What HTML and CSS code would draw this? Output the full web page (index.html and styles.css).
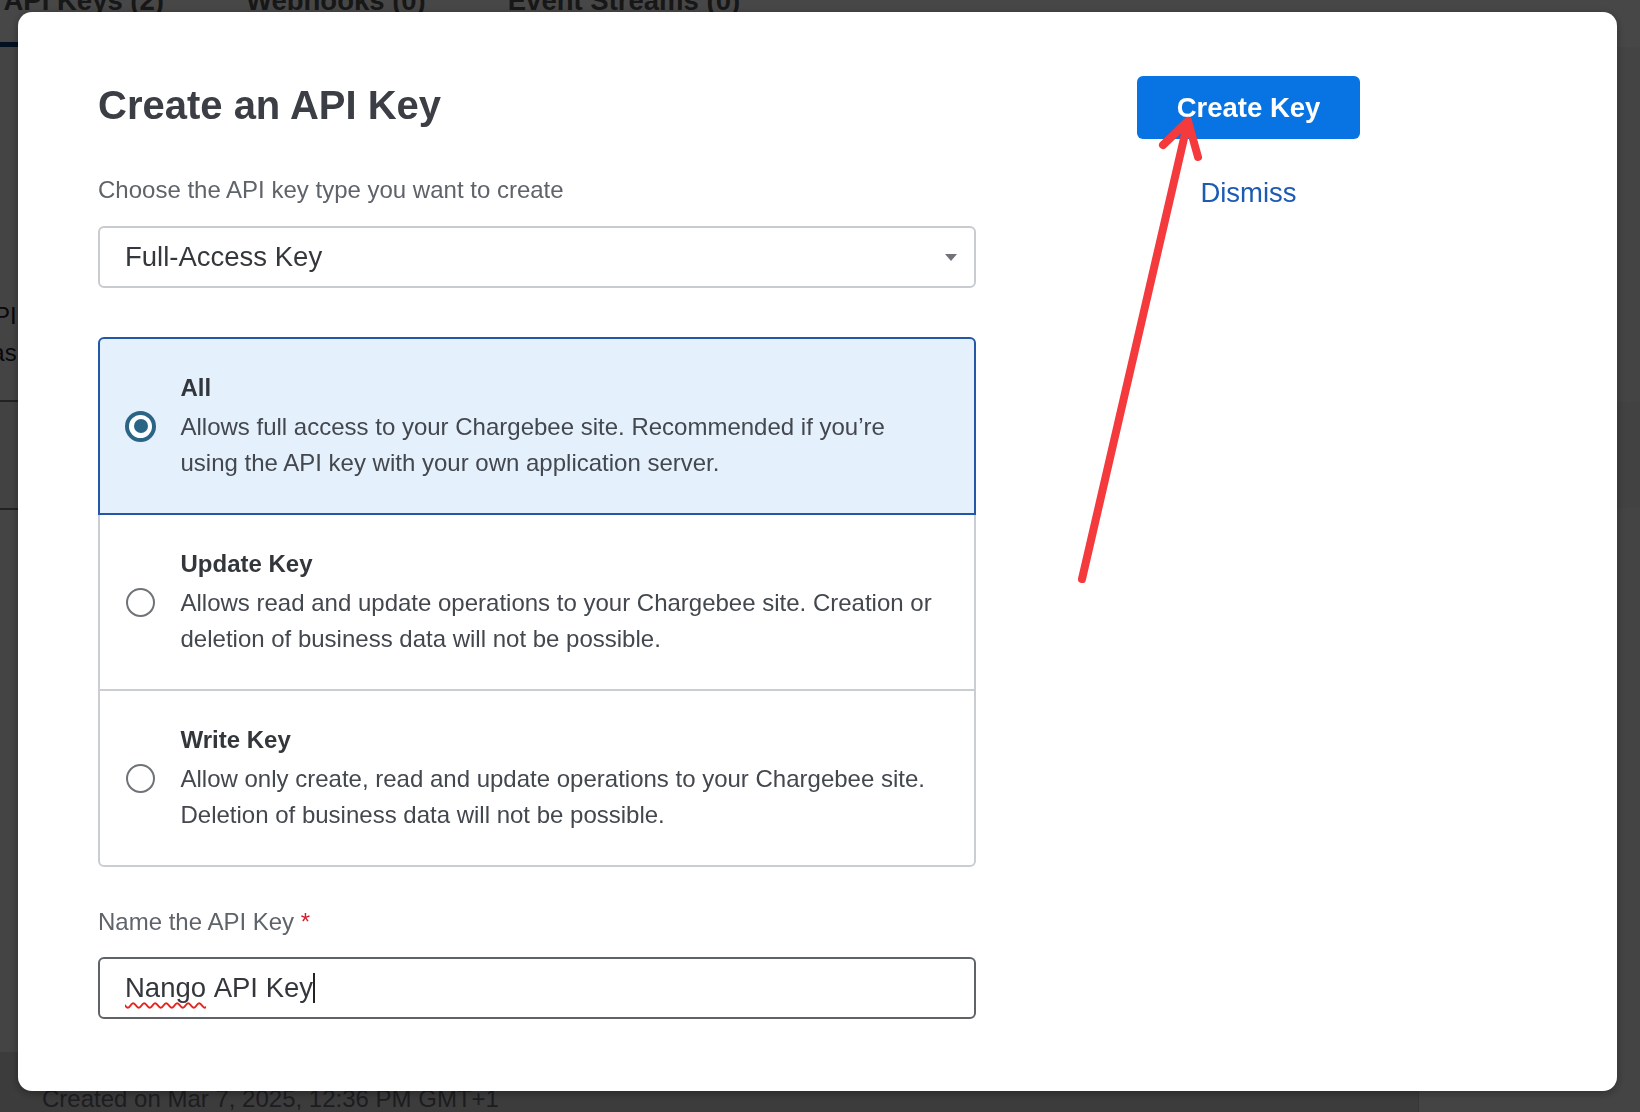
FILE: index.html
```html
<!DOCTYPE html>
<html lang="en">
<head>
<meta charset="utf-8">
<title>Create an API Key</title>
<link rel="stylesheet" href="styles.css">
</head>
<body>
<div class="page">
  <nav class="tabs">
    <span class="tab active">API Keys (2)</span>
    <span class="tab">Webhooks (0)</span>
    <span class="tab">Event Streams (0)</span>
  </nav>
  <div class="page-body">
    <p class="intro">API keys are used to authenticate requests<br>has full access to your site data.</p>
    <div class="rule"></div>
    <div class="band"></div>
    <div class="rule"></div>
  </div>
  <div class="card">
    <p class="created">Created on Mar 7, 2025, 12:36 PM GMT+1</p>
  </div>
</div>

<div class="overlay"></div>

<div class="modal-layer">
  <div class="modal">
    <section class="form">
      <h1 class="title">Create an API Key</h1>
      <p class="label label-type">Choose the API key type you want to create</p>
      <div class="select">
        <span class="select-value">Full-Access Key</span>
        <svg class="caret" width="12" height="7" viewBox="0 0 12 7"><path d="M0 0 H12 L6 7 Z" fill="#6f7277"/></svg>
      </div>

      <div class="options">
        <div class="option selected">
          <span class="radio-slot"><span class="radio checked"></span></span>
          <div class="option-text">
            <div class="option-title">All</div>
            <div class="option-desc">Allows full access to your Chargebee site. Recommended if you’re using the API key with your own application server.</div>
          </div>
        </div>
        <div class="option">
          <span class="radio-slot"><span class="radio"></span></span>
          <div class="option-text">
            <div class="option-title">Update Key</div>
            <div class="option-desc">Allows read and update operations to your Chargebee site. Creation or deletion of business data will not be possible.</div>
          </div>
        </div>
        <div class="option last">
          <span class="radio-slot"><span class="radio"></span></span>
          <div class="option-text">
            <div class="option-title">Write Key</div>
            <div class="option-desc">Allow only create, read and update operations to your Chargebee site. Deletion of business data will not be possible.</div>
          </div>
        </div>
      </div>

      <p class="label label-name">Name the API Key <span class="req">*</span></p>
      <div class="input"><span class="misspelled">Nango</span>&nbsp;API Key<span class="cursor"></span></div>
    </section>

    <aside class="actions">
      <button class="btn-primary">Create Key</button>
      <a class="dismiss">Dismiss</a>
    </aside>
  </div>
</div>

<svg class="annotation" width="1640" height="1112" viewBox="0 0 1640 1112">
  <path d="M1082 579 L1188 121 M1163 145 L1188 121 L1198 157" fill="none" stroke="#f43a3c" stroke-width="8" stroke-linecap="round" stroke-linejoin="round"/>
</svg>
</body>
</html>
```

FILE: styles.css
```css
html, body {
  margin: 0;
  padding: 0;
}

body {
  width: 1640px;
  height: 1112px;
  overflow: hidden;
  font-family: "Liberation Sans", Arial, Helvetica, sans-serif;
  background: #ffffff;
  position: relative;
}

/* ---------- background page ---------- */
.page {
  height: 1112px;
  display: flex;
  flex-direction: column;
  background: #f4f4f6;
}

.tabs {
  display: flex;
  margin: -15.5px 0 0 -37.5px;
  background: #ffffff;
}

.tab {
  font-size: 27.5px;
  font-weight: 700;
  line-height: 32px;
  color: #555555;
  padding: 0 41px 25.5px;
  border-bottom: 5px solid transparent;
}

.tab.active {
  border-bottom-color: #0b3a7a;
}

.page-body {
  flex: 1;
  display: flex;
  flex-direction: column;
  padding-top: 250px;
}

.intro {
  margin: 0 0 0 -22px;
  font-size: 24px;
  line-height: 37px;
  color: #222222;
  white-space: nowrap;
}

.rule {
  width: 40px;
  height: 2px;
  background: #7a7a7a;
}

.intro + .rule {
  margin-top: 29px;
}

.band {
  height: 106px;
  background: #ececef;
}

.card {
  height: 60px;
  width: 1418px;
  background: #d6d6db;
  border-right: 1px solid #c4c4c9;
}

.created {
  margin: 29px 0 0 42px;
  font-size: 24px;
  line-height: 36px;
  color: #6a6a70;
  white-space: nowrap;
}

/* ---------- overlay + modal ---------- */
.overlay {
  position: fixed;
  inset: 0;
  background: rgba(0, 0, 0, 0.72);
}

.modal-layer {
  position: fixed;
  inset: 0;
  padding: 12px 23px 21px 18px;
  display: flex;
}

.modal {
  flex: 1;
  display: flex;
  align-items: flex-start;
  background: #ffffff;
  border-radius: 14px;
  box-shadow: 0 2px 10px rgba(0, 0, 0, 0.35);
  padding: 64px 0 0 80px;
}

.form {
  width: 878px;
  padding-top: 5.5px;
  display: flex;
  flex-direction: column;
}

.title {
  margin: 0;
  font-size: 40px;
  line-height: 46px;
  font-weight: 700;
  color: #3b3e44;
}

.label {
  margin: 0;
  font-size: 24px;
  line-height: 36px;
  color: #5f636a;
}

.label-type {
  margin-top: 44.5px;
}

.label-name {
  margin-top: 37px;
}

.req {
  color: #d61f2b;
}

.select {
  margin-top: 18px;
  height: 62px;
  box-sizing: border-box;
  border: 2px solid #c8cbd0;
  border-radius: 6px;
  display: flex;
  align-items: center;
  justify-content: space-between;
  padding: 0 17px 0 25px;
}

.select-value {
  font-size: 27.5px;
  color: #34373c;
}

.caret {
  display: block;
}

/* ---------- options ---------- */
.options {
  margin-top: 49px;
  display: flex;
  flex-direction: column;
}

.option {
  position: relative;
  height: 178px;
  box-sizing: border-box;
  border: 2px solid #cacdd2;
  margin-top: -2px;
  display: flex;
  align-items: center;
  padding: 0 34px 0 25px;
  background: #ffffff;
}

.option:first-child {
  margin-top: 0;
  border-radius: 6px 6px 0 0;
}

.option.last {
  border-radius: 0 0 6px 6px;
}

.option.selected {
  z-index: 1;
  background: #e5f0fd;
  border-color: #2458a6;
}

.radio-slot {
  width: 31px;
  height: 31px;
  flex: none;
  display: flex;
  align-items: center;
  justify-content: center;
  margin-right: 24.5px;
}

.radio {
  width: 29px;
  height: 29px;
  box-sizing: border-box;
  border: 2px solid #6f7378;
  border-radius: 50%;
  background: #ffffff;
}

.radio.checked {
  width: 31px;
  height: 31px;
  border: 4px solid #2a6586;
  background: #ffffff;
  display: flex;
  align-items: center;
  justify-content: center;
}

.radio.checked::after {
  content: "";
  width: 14px;
  height: 14px;
  border-radius: 50%;
  background: #2a6586;
}

.option-text {
  flex: 1;
}

.option-title {
  font-size: 24px;
  line-height: 34px;
  font-weight: 700;
  color: #33363b;
  margin-bottom: 4px;
}

.option-desc {
  font-size: 24px;
  line-height: 36px;
  color: #43474e;
}

/* ---------- name input ---------- */
.input {
  margin-top: 17px;
  height: 62px;
  box-sizing: border-box;
  border: 2px solid #5f6368;
  border-radius: 6px;
  display: flex;
  align-items: center;
  padding: 0 25px;
  font-size: 27.5px;
  color: #33363b;
  white-space: nowrap;
}

.misspelled {
  text-decoration: underline wavy #e2261f;
  text-decoration-thickness: 1.5px;
  text-underline-offset: 5px;
  text-decoration-skip-ink: none;
}

.cursor {
  display: inline-block;
  width: 2px;
  height: 30px;
  background: #222222;
}

/* ---------- actions ---------- */
.actions {
  width: 223px;
  margin-left: 161px;
  display: flex;
  flex-direction: column;
  align-items: center;
}

.btn-primary {
  width: 223px;
  height: 63px;
  border: none;
  border-radius: 6px;
  background: #0873e2;
  color: #ffffff;
  font-family: "Liberation Sans", Arial, Helvetica, sans-serif;
  font-size: 27.5px;
  font-weight: 700;
  padding: 0;
}

.dismiss {
  margin-top: 36px;
  font-size: 27.5px;
  line-height: 36px;
  color: #1d5bb3;
}

/* ---------- annotation ---------- */
.annotation {
  position: absolute;
  top: 0;
  left: 0;
  pointer-events: none;
}
```
